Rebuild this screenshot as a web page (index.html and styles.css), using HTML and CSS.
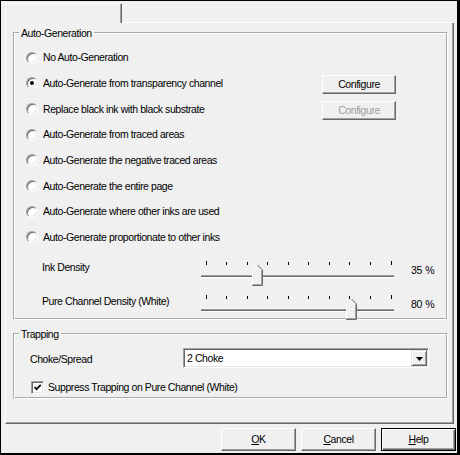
FILE: index.html
```html
<!DOCTYPE html>
<html>
<head>
<meta charset="utf-8">
<link rel="stylesheet" href="styles.css">
</head>
<body>
<div class="window">
  <div class="tabs">
    <div class="tab"></div>
    <div class="tab-fill"></div>
  </div>
  <div class="panel">
    <fieldset class="group group-auto">
      <legend>Auto-Generation</legend>
      <div class="group-body auto-body">
        <div class="opt"><span class="radio"></span><span class="lbl">No Auto-Generation</span></div>
        <div class="opt"><span class="radio checked"></span><span class="lbl">Auto-Generate from transparency channel</span><button class="btn btn-config">Configure</button></div>
        <div class="opt"><span class="radio"></span><span class="lbl">Replace black ink with black substrate</span><button class="btn btn-config" disabled>Configure</button></div>
        <div class="opt"><span class="radio"></span><span class="lbl">Auto-Generate from traced areas</span></div>
        <div class="opt"><span class="radio"></span><span class="lbl">Auto-Generate the negative traced areas</span></div>
        <div class="opt"><span class="radio"></span><span class="lbl">Auto-Generate the entire page</span></div>
        <div class="opt"><span class="radio"></span><span class="lbl">Auto-Generate where other inks are used</span></div>
        <div class="opt"><span class="radio"></span><span class="lbl">Auto-Generate proportionate to other inks</span></div>
        <div class="slider-row">
          <span class="slabel">Ink Density</span>
          <svg class="slider" width="200" height="34" viewBox="0 0 200 34">
            <g fill="#000">
              <rect x="10" y="11" width="1" height="4"/><rect x="30" y="12" width="1" height="3"/><rect x="51" y="12" width="1" height="3"/><rect x="71" y="12" width="1" height="3"/><rect x="92" y="12" width="1" height="3"/><rect x="112" y="12" width="1" height="3"/><rect x="133" y="12" width="1" height="3"/><rect x="153" y="12" width="1" height="3"/><rect x="174" y="12" width="1" height="3"/><rect x="195" y="11" width="1" height="4"/>
            </g>
            <rect x="5" y="25" width="193" height="1" fill="#a0a0a0"/>
            <rect x="5" y="26" width="193" height="1" fill="#696969"/>
            <rect x="5" y="27" width="193" height="1" fill="#fff"/>
            <g transform="translate(56 0)">
              <polygon points="0,20 5.5,14.5 11,20 11,35 0,35" fill="#f0f0f0"/>
              <polyline points="0.5,34.5 0.5,20.2 5.5,15.2" fill="none" stroke="#fff" stroke-width="1"/>
              <polyline points="5.5,15 10.5,20 10.5,35.5 0,35.5" fill="none" stroke="#696969" stroke-width="1"/>
              <polyline points="9.5,20.5 9.5,34.5 1,34.5" fill="none" stroke="#a0a0a0" stroke-width="1"/>
            </g>
          </svg>
          <span class="sval">35 %</span>
        </div>
        <div class="slider-row">
          <span class="slabel">Pure Channel Density (White)</span>
          <svg class="slider" width="200" height="34" viewBox="0 0 200 34">
            <g fill="#000">
              <rect x="10" y="11" width="1" height="4"/><rect x="30" y="12" width="1" height="3"/><rect x="51" y="12" width="1" height="3"/><rect x="71" y="12" width="1" height="3"/><rect x="92" y="12" width="1" height="3"/><rect x="112" y="12" width="1" height="3"/><rect x="133" y="12" width="1" height="3"/><rect x="153" y="12" width="1" height="3"/><rect x="174" y="12" width="1" height="3"/><rect x="195" y="11" width="1" height="4"/>
            </g>
            <rect x="5" y="25" width="193" height="1" fill="#a0a0a0"/>
            <rect x="5" y="26" width="193" height="1" fill="#696969"/>
            <rect x="5" y="27" width="193" height="1" fill="#fff"/>
            <g transform="translate(150 0)">
              <polygon points="0,20 5.5,14.5 11,20 11,35 0,35" fill="#f0f0f0"/>
              <polyline points="0.5,34.5 0.5,20.2 5.5,15.2" fill="none" stroke="#fff" stroke-width="1"/>
              <polyline points="5.5,15 10.5,20 10.5,35.5 0,35.5" fill="none" stroke="#696969" stroke-width="1"/>
              <polyline points="9.5,20.5 9.5,34.5 1,34.5" fill="none" stroke="#a0a0a0" stroke-width="1"/>
            </g>
          </svg>
          <span class="sval">80 %</span>
        </div>
      </div>
    </fieldset>
    <fieldset class="group group-trap">
      <legend>Trapping</legend>
      <div class="group-body trap-body">
        <div class="combo-row">
          <span class="clabel">Choke/Spread</span>
          <div class="combo">
            <span class="combo-text">2 Choke</span>
            <span class="combo-btn"><svg width="7" height="4" viewBox="0 0 7 4"><polygon points="0,0 7,0 3.5,4" fill="#000"/></svg></span>
          </div>
        </div>
        <div class="check-row">
          <span class="check"><svg width="9" height="9" viewBox="0 0 9 9"><polyline points="1.5,4 3.5,6.2 7.8,1.8" fill="none" stroke="#000" stroke-width="1.8"/></svg></span>
          <span class="lbl">Suppress Trapping on Pure Channel (White)</span>
        </div>
      </div>
    </fieldset>
  </div>
  <div class="buttons">
    <button class="btn btn-main"><u>O</u>K</button>
    <button class="btn btn-main"><u>C</u>ancel</button>
    <button class="btn btn-main btn-default"><u>H</u>elp</button>
  </div>
</div>
</body>
</html>
```
FILE: styles.css
```css
html, body {
  margin: 0;
  padding: 0;
  background: #f0f0f0;
}
body {
  font-family: "Liberation Sans", Arial, sans-serif;
  font-size: 10.5px;
  letter-spacing: -0.42px;
  color: #000;
}
.window {
  box-sizing: border-box;
  width: 460px;
  height: 455px;
  border-style: solid;
  border-color: #000;
  border-width: 1px 3px 2px 1px;
  background: #f0f0f0;
  display: flex;
  flex-direction: column;
}
.tabs {
  display: flex;
  margin: 2px 0 0 4px;
  width: 449px;
  height: 20px;
}
.tab {
  box-sizing: border-box;
  width: 117px;
  height: 20px;
  border-top: 1px solid #fff;
  border-left: 1px solid #fff;
  border-right: 1px solid #696969;
  box-shadow: inset -1px 0 0 #a0a0a0;
}
.tab-fill {
  box-sizing: border-box;
  flex: 1;
  height: 20px;
  border-bottom: 1px solid #fff;
}
.panel {
  box-sizing: border-box;
  margin-left: 4px;
  width: 449px;
  height: 401px;
  border-left: 1px solid #fff;
  border-right: 1px solid #696969;
  border-bottom: 1px solid #696969;
  box-shadow: inset -1px -1px 0 #a0a0a0;
  padding: 3.5px 5px 0 7px;
  display: flex;
  flex-direction: column;
}
.group {
  margin: 0;
  padding: 0;
  min-width: 0;
  border: 2px groove #fff;
}
.group legend {
  margin-left: 4px;
  padding: 0 2px;
  line-height: 13px;
}
.group-trap {
  margin-top: 7.25px;
}
.auto-body {
  padding: 5.3px 0 0 11px;
}
.opt {
  display: flex;
  align-items: center;
  height: 25.7px;
}
.lbl {
  line-height: 13px;
  white-space: nowrap;
}
.opt .lbl {
  flex: 1;
}
.radio {
  box-sizing: border-box;
  width: 12px;
  height: 12px;
  margin-right: 5px;
  border-radius: 50%;
  background: #fff;
  border: 1px solid;
  border-color: #a0a0a0 #fff #fff #a0a0a0;
  box-shadow: inset 1px 1px 0 #696969, inset -1px -1px 0 #e3e3e3;
  display: flex;
  align-items: center;
  justify-content: center;
  flex: none;
}
.radio.checked::after {
  content: "";
  width: 4px;
  height: 4px;
  border-radius: 50%;
  background: #000;
}
.btn {
  box-sizing: border-box;
  appearance: none;
  margin: 0;
  padding: 0;
  font: inherit;
  letter-spacing: inherit;
  color: #000;
  background: #f0f0f0;
  border-style: solid;
  border-width: 1px;
  border-color: #fff #696969 #696969 #fff;
  box-shadow: inset -1px -1px 0 #a0a0a0;
  text-align: center;
  line-height: 13px;
}
.btn:disabled {
  color: #a0a0a0;
}
.btn-config {
  width: 74px;
  height: 19px;
  margin: 2px 50px 0 0;
}
.slider-row {
  display: flex;
  align-items: flex-start;
  height: 34px;
  padding-left: 16px;
}
.slabel {
  width: 154px;
  padding-top: 10.5px;
  line-height: 13px;
  white-space: nowrap;
}
.slider {
  display: block;
  overflow: visible;
  flex: none;
}
.sval {
  margin-left: 15px;
  padding-top: 14px;
  line-height: 13px;
  white-space: nowrap;
  word-spacing: 1px;
}
.trap-body {
  padding: 7.5px 0 3.5px 15px;
}
.combo-row {
  display: flex;
  align-items: center;
  height: 20px;
}
.clabel {
  width: 153px;
  line-height: 13px;
  padding-top: 2px;
}
.combo {
  box-sizing: border-box;
  width: 246px;
  height: 20px;
  display: flex;
  align-items: center;
  background: #fff;
  border: 1px solid;
  border-color: #a0a0a0 #fff #fff #a0a0a0;
  box-shadow: inset 1px 1px 0 #696969, inset -1px -1px 0 #e3e3e3;
  padding: 1px;
}
.combo-text {
  flex: 1;
  padding-left: 2px;
  line-height: 13px;
}
.combo-btn {
  box-sizing: border-box;
  width: 16px;
  height: 16px;
  background: #f0f0f0;
  border: 1px solid;
  border-color: #e3e3e3 #696969 #696969 #e3e3e3;
  box-shadow: inset 1px 1px 0 #fff, inset -1px -1px 0 #a0a0a0;
  display: flex;
  align-items: center;
  justify-content: center;
}
.combo-btn svg {
  display: block;
  margin-top: 1px;
}
.check-row {
  display: flex;
  align-items: center;
  height: 13px;
  margin-top: 12.5px;
  padding-left: 1px;
}
.check {
  box-sizing: border-box;
  width: 13px;
  height: 13px;
  margin-right: 4px;
  background: #fff;
  border: 1px solid;
  border-color: #a0a0a0 #fff #fff #a0a0a0;
  box-shadow: inset 1px 1px 0 #696969, inset -1px -1px 0 #e3e3e3;
  display: flex;
  align-items: center;
  justify-content: center;
  flex: none;
}
.check svg {
  display: block;
}
.buttons {
  display: flex;
  justify-content: flex-end;
  gap: 5px;
  padding: 4px 1px 0 0;
}
.btn-main {
  width: 75px;
  height: 23px;
}
.btn-default {
  border-color: #000;
  box-shadow: inset 1px 1px 0 #fff, inset -1px -1px 0 #696969, inset -2px -2px 0 #a0a0a0;
}
```
